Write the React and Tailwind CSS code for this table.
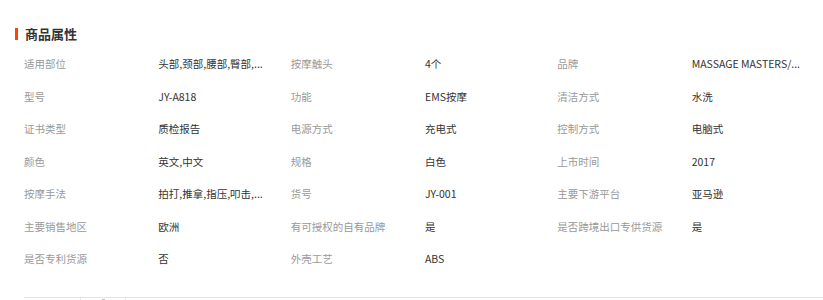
import React from "react";

const rows = [
  ["适用部位", "头部,颈部,腰部,臀部,...", "按摩触头", "4个", "品牌", "MASSAGE MASTERS/..."],
  ["型号", "JY-A818", "功能", "EMS按摩", "清洁方式", "水洗"],
  ["证书类型", "质检报告", "电源方式", "充电式", "控制方式", "电脑式"],
  ["颜色", "英文,中文", "规格", "白色", "上市时间", "2017"],
  ["按摩手法", "拍打,推拿,指压,叩击,...", "货号", "JY-001", "主要下游平台", "亚马逊"],
  ["主要销售地区", "欧洲", "有可授权的自有品牌", "是", "是否跨境出口专供货源", "是"],
  ["是否专利货源", "否", "外壳工艺", "ABS", "", ""],
];

export default function App() {
  return (
    <div
      className="w-[823px] h-[300px] bg-white overflow-hidden"
      style={{ fontFamily: '"Noto Sans CJK SC", "Microsoft YaHei", sans-serif' }}
    >
      <div className="pt-[26px] pl-[15px] flex items-center h-[41px]">
        <div className="w-[3px] h-[12px] bg-[#ff4400]"></div>
        <div className="ml-[7px] text-[13px] leading-[15px] font-bold text-[#333]">商品属性</div>
      </div>
      <div className="ml-[24px] mt-[7px] w-[800px]">
        {rows.map((r, i) => (
          <div key={i} className="grid grid-cols-6 h-[32.5px] items-center text-[10.5px] leading-[14px]">
            {r.map((c, j) => (
              <div
                key={j}
                className={
                  (j % 2 === 0 ? "text-[#999]" : "text-[#333] pl-[1px]") +
                  " whitespace-nowrap overflow-hidden"
                }
              >
                {c}
              </div>
            ))}
          </div>
        ))}
      </div>
      <div className="ml-[24px] mt-[21px] border-t border-[#e5e5e5] h-[3px] flex items-start">
        <div className="ml-[56px] w-px h-[3px] bg-[#e5e5e5]"></div>
        <div className="ml-[21px] mt-[1px] w-[3px] h-px bg-[#bbb]"></div>
        <div className="ml-[20px] w-px h-[3px] bg-[#e5e5e5]"></div>
      </div>
    </div>
  );
}
